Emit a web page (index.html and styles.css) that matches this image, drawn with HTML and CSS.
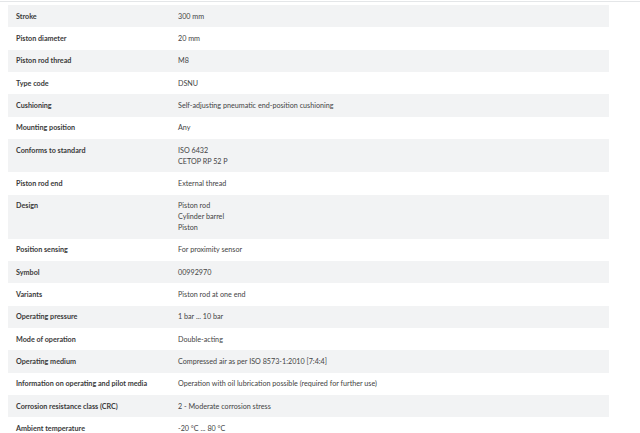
FILE: index.html
```html
<!DOCTYPE html>
<html lang="en">
<head>
<meta charset="utf-8">
<title>Technical data</title>
<link rel="stylesheet" href="styles.css">
</head>
<body>
<div class="page">
  <table class="specs">
    <tbody>
      <tr><th>Stroke</th><td>300 mm</td></tr>
      <tr><th>Piston diameter</th><td>20 mm</td></tr>
      <tr><th>Piston rod thread</th><td>M8</td></tr>
      <tr><th>Type code</th><td>DSNU</td></tr>
      <tr><th>Cushioning</th><td>Self-adjusting pneumatic end-position cushioning</td></tr>
      <tr><th>Mounting position</th><td>Any</td></tr>
      <tr><th>Conforms to standard</th><td>ISO 6432<br>CETOP RP 52 P</td></tr>
      <tr><th>Piston rod end</th><td>External thread</td></tr>
      <tr><th>Design</th><td>Piston rod<br>Cylinder barrel<br>Piston</td></tr>
      <tr><th>Position sensing</th><td>For proximity sensor</td></tr>
      <tr><th>Symbol</th><td>00992970</td></tr>
      <tr><th>Variants</th><td>Piston rod at one end</td></tr>
      <tr><th>Operating pressure</th><td>1 bar ... 10 bar</td></tr>
      <tr><th>Mode of operation</th><td>Double-acting</td></tr>
      <tr><th>Operating medium</th><td>Compressed air as per ISO 8573-1:2010 [7:4:4]</td></tr>
      <tr><th>Information on operating and pilot media</th><td>Operation with oil lubrication possible (required for further use)</td></tr>
      <tr><th>Corrosion resistance class (CRC)</th><td>2 - Moderate corrosion stress</td></tr>
      <tr><th>Ambient temperature</th><td>-20 °C ... 80 °C</td></tr>
    </tbody>
  </table>
</div>
</body>
</html>
```
FILE: styles.css
```css
html, body {
  margin: 0;
  padding: 0;
  background: #ffffff;
}
body {
  font-family: Lato, "Liberation Sans", sans-serif;
  color: #333333;
}
.page {
  border-top: 1px solid #e4e6e8;
  margin-top: 1px;
  padding: 3px 31px 0 8px;
}
.specs {
  width: 601px;
  border-collapse: collapse;
  font-size: 7.2px;
  line-height: 11px;
}
.specs tr:nth-child(odd) {
  background: #f2f3f4;
}
.specs th,
.specs td {
  padding: 5.67px 8px;
  vertical-align: top;
  text-align: left;
}
.specs th {
  width: 146px;
  font-weight: 700;
  color: #3a3a3a;
}
.specs td {
  font-weight: 400;
  color: #444444;
}
```
